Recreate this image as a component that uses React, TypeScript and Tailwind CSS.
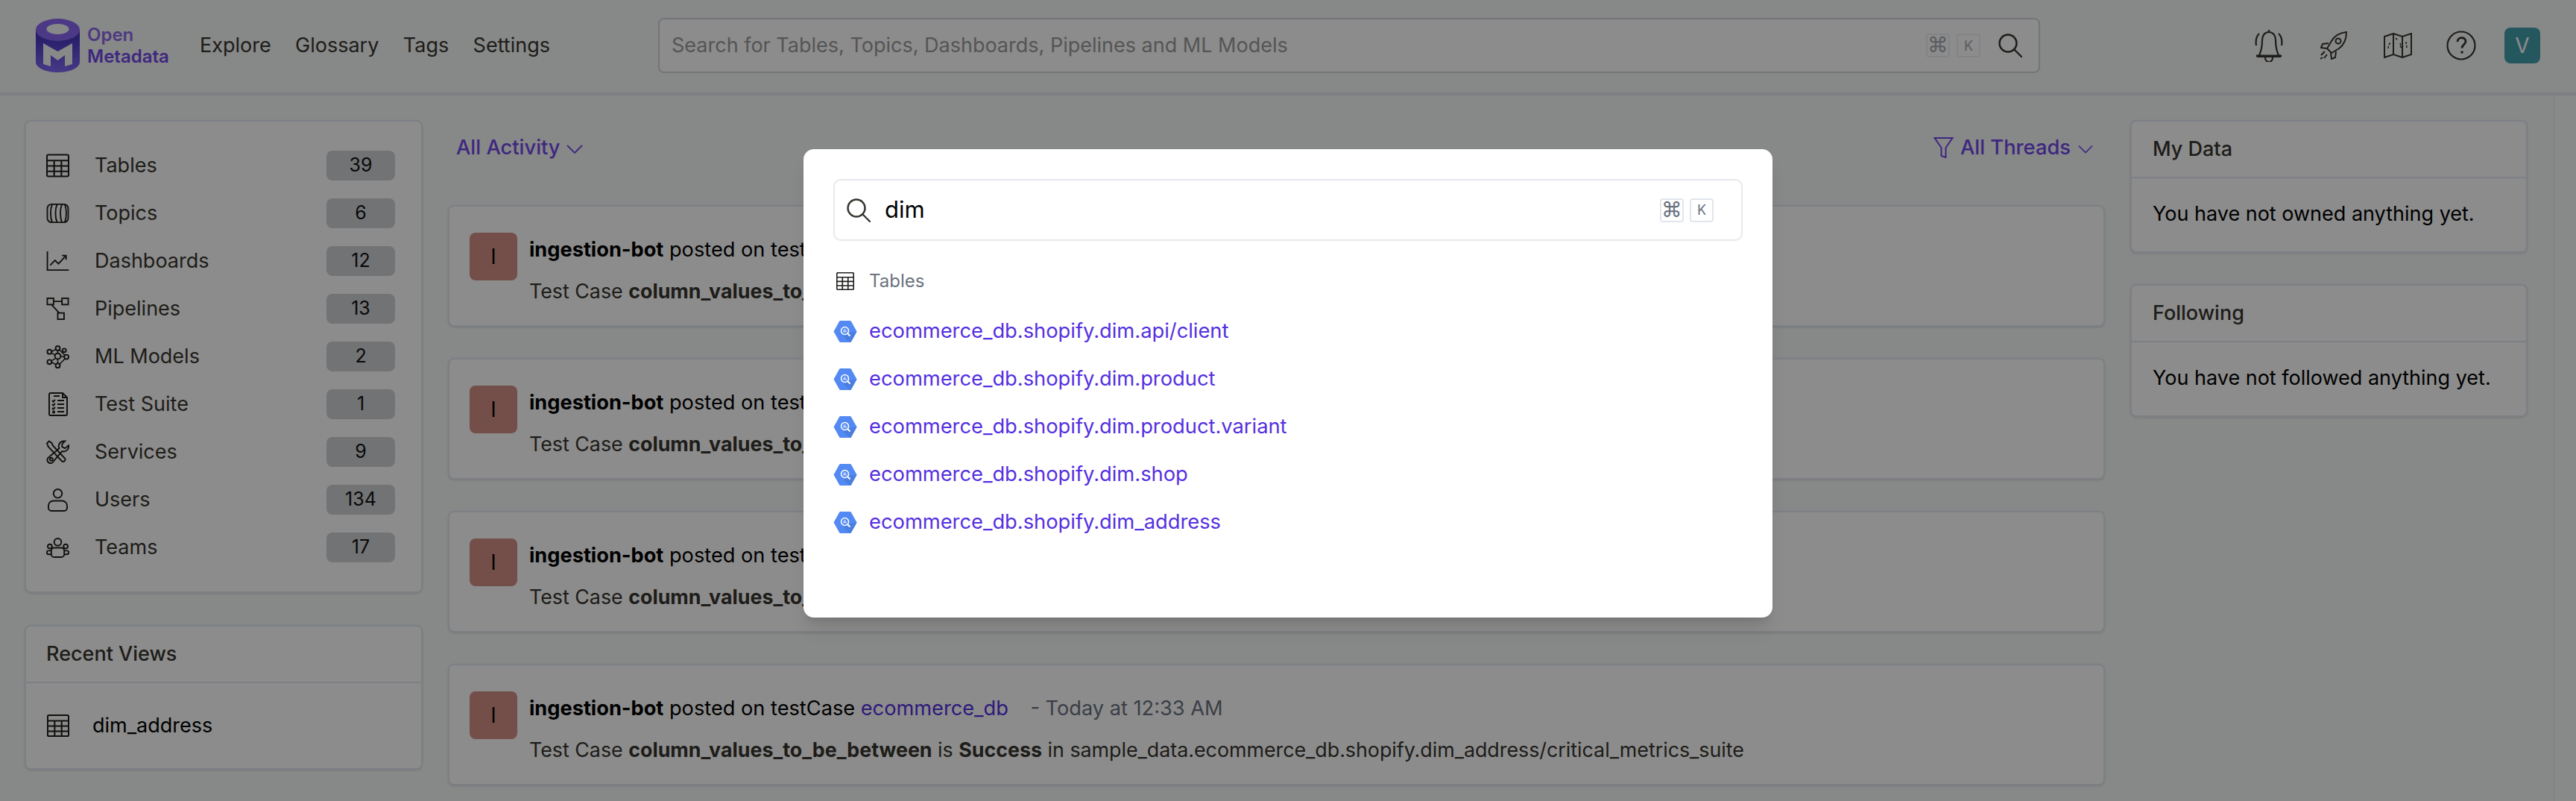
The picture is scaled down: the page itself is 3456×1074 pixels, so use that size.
import React from "react";

type IconProps = { className?: string };

function TableIcon({ className }: IconProps) {
  return (
    <svg viewBox="0 0 32 32" className={className} fill="none" stroke="currentColor" strokeWidth="2.200">
      <rect x="1" y="1" width="30" height="30" rx="2" />
      <path d="M1 9h30M1 16.500h30M1 24h30M11 9v22M21 9v22" />
    </svg>
  );
}

function TopicIcon({ className }: IconProps) {
  return (
    <svg viewBox="0 0 32 30" className={className} fill="none" stroke="currentColor" strokeWidth="2">
      <rect x="1" y="2" width="30" height="26" rx="6" />
      <path d="M8 2c-3 7-3 19 0 26M15 2c-3 7-3 19 0 26M22 2c-3 7-3 19 0 26M26 2c3 7 3 19 0 26" />
    </svg>
  );
}

function DashboardIcon({ className }: IconProps) {
  return (
    <svg viewBox="0 0 32 28" className={className} fill="none" stroke="currentColor" strokeWidth="2">
      <path d="M1 0v27h31" />
      <path d="M5 20l7-7 5 5 11-12M22 6h6v6" />
    </svg>
  );
}

function PipelineIcon({ className }: IconProps) {
  return (
    <svg viewBox="0 0 32 32" className={className} fill="none" stroke="currentColor" strokeWidth="2">
      <rect x="1" y="1" width="9" height="9" />
      <rect x="22" y="1" width="9" height="9" />
      <rect x="16" y="22" width="9" height="9" />
      <path d="M10 5.500h12M7 10l11 12" />
    </svg>
  );
}

function ModelIcon({ className }: IconProps) {
  return (
    <svg viewBox="0 0 32 32" className={className} fill="none" stroke="currentColor" strokeWidth="2">
      <circle cx="16" cy="15" r="4" />
      <circle cx="16" cy="4" r="3" />
      <circle cx="28" cy="16" r="3" />
      <circle cx="16" cy="28" r="3" />
      <circle cx="4.500" cy="9" r="3" />
      <circle cx="4.500" cy="23" r="3" />
      <circle cx="25" cy="7" r="2.500" />
      <path d="M16 7v4M20 15.500h5M16 19v6M7 10.500l5.500 3M7 21.500l5.500-3M18.500 26l8-8M18 6l8 8M7 9l7-4M7 23l7 4" strokeWidth="1.600" />
    </svg>
  );
}

function SuiteIcon({ className }: IconProps) {
  return (
    <svg viewBox="0 0 26 32" className={className} fill="none" stroke="currentColor" strokeWidth="2">
      <path d="M3 1h16l6 6v22a2 2 0 0 1-2 2H3a2 2 0 0 1-2-2V3a2 2 0 0 1 2-2z" />
      <path d="M19 1v6h6M7 5h8M12 11h9M12 16h9M12 21h9M12 26h9" />
      <path d="M5 11l1.500 1.500L9 10M5 16l1.500 1.500L9 15M5 21l1.500 1.500L9 20M5.500 25l3 3M8.500 25l-3 3" />
    </svg>
  );
}

function ServiceIcon({ className }: IconProps) {
  return (
    <svg viewBox="0 0 32 32" className={className} fill="none" stroke="currentColor" strokeWidth="2">
      <path d="M1 4l3-3 4 3 1 3 17 18a3 3 0 0 1-4 4L5 11 3 9z" />
      <path d="M24 1a7 7 0 0 0-6 10L4 23a4.500 4.500 0 1 0 6 6l12-14a7 7 0 0 0 9-8l-5 4-4-2v-4l4-4z" />
      <circle cx="7" cy="26" r="2" />
    </svg>
  );
}

function UserIcon({ className }: IconProps) {
  return (
    <svg viewBox="0 0 28 32" className={className} fill="none" stroke="currentColor" strokeWidth="2">
      <circle cx="14" cy="7" r="6" />
      <path d="M8 17h12a7 7 0 0 1 7 7v3a4 4 0 0 1-4 4H5a4 4 0 0 1-4-4v-3a7 7 0 0 1 7-7z" />
    </svg>
  );
}

function TeamIcon({ className }: IconProps) {
  return (
    <svg viewBox="0 0 32 28" className={className} fill="none" stroke="currentColor" strokeWidth="2">
      <circle cx="16" cy="6" r="5" />
      <circle cx="5" cy="12" r="3" />
      <circle cx="27" cy="12" r="3" />
      <path d="M11 14h10a4 4 0 0 1 4 4v5a4 4 0 0 1-4 4H11a4 4 0 0 1-4-4v-5a4 4 0 0 1 4-4z" />
      <path d="M7 18H3a2 2 0 0 0-2 2v1a2 2 0 0 0 2 2h4M25 18h4a2 2 0 0 1 2 2v1a2 2 0 0 1-2 2h-4" />
    </svg>
  );
}

function SearchIcon({ className }: IconProps) {
  return (
    <svg viewBox="0 0 32 32" className={className} fill="none" stroke="currentColor" strokeWidth="2.400">
      <circle cx="13" cy="13" r="11.500" />
      <path d="M21.500 21.500L31 31" strokeLinecap="round" />
    </svg>
  );
}

function Chevron({ className }: IconProps) {
  return (
    <svg viewBox="0 0 22 12" className={className} fill="none" stroke="currentColor" strokeWidth="1.800">
      <path d="M1 1l10 10L21 1" />
    </svg>
  );
}

function BigQueryIcon() {
  return (
    <svg viewBox="0 0 32 29" className="h-[29px] w-8 shrink-0">
      <path d="M0.500 14.500L8 1a2 2 0 0 1 1.500-1h13a2 2 0 0 1 1.500 1l7.500 13.500L24 28a2 2 0 0 1-1.500 1h-13A2 2 0 0 1 8 28z" fill="#5389f2" />
      <path d="M19 18l3-2 9.500-1.500L24 28a2 2 0 0 1-1.500 1h-1L14 21z" fill="#4a7fe0" />
      <circle cx="15.500" cy="13.500" r="5" fill="none" stroke="#fff" strokeWidth="1.500" />
      <path d="M19 17l3.500 3.500" stroke="#fff" strokeWidth="2" />
      <path d="M14 12.500v3M15.700 11v4.500M17.200 13.500v2" stroke="#fff" strokeWidth="1" />
    </svg>
  );
}

function Logo() {
  return (
    <svg viewBox="0 0 59 72" className="h-[72px] w-[59px]">
      <defs>
        <linearGradient id="cyl" x1="0" y1="0" x2="0" y2="1">
          <stop offset="0" stopColor="#3c2ab4" />
          <stop offset="1" stopColor="#8269f5" />
        </linearGradient>
      </defs>
      <path d="M0 14h59v44c0 8-13 14-29.500 14S0 66 0 58z" fill="url(#cyl)" />
      <ellipse cx="29.500" cy="15" rx="29.500" ry="15" fill="#8a68f2" />
      <ellipse cx="29.500" cy="14" rx="15" ry="7" fill="#f6f8f8" />
      <path d="M10 33l19.500 11L49 33v28l-10 3V49l-9.500 7-9.500-7v15l-10-3z" fill="#f6f8f8" />
    </svg>
  );
}

function HeaderIcons() {
  return (
    <div className="flex items-center text-[#37352f]">
      <svg viewBox="0 0 38 44" className="h-[44px] w-[38px]" fill="none" stroke="currentColor" strokeWidth="2.200">
        <path d="M19 1v3M19 4c-6 0-9 5-9 11 0 8-1 15-5 22h28c-4-7-5-14-5-22 0-6-3-11-9-11z" />
        <path d="M2 36h34" strokeWidth="3" />
        <path d="M14 38c0 8 10 8 10 0M6 6C2 10 1 16 2 22M32 6c4 4 5 10 4 16" />
      </svg>
      <svg viewBox="0 0 38 38" className="ml-[49px] h-[38px] w-[38px]" fill="none" stroke="currentColor" strokeWidth="2">
        <path d="M36 1c-9 1-16 5-20 12l-6 10 6 6 10-6c7-5 10-13 10-22z" />
        <circle cx="25" cy="13" r="3.500" />
        <path d="M12 16l-8 1-2 5 8 1M22 27l-1 8-5 2-1-8M7 27l-5 5M10 31l-4 5M4 35l-3 2" />
      </svg>
      <svg viewBox="0 0 38 34" className="ml-[48px] h-[34px] w-[38px]" fill="none" stroke="currentColor" strokeWidth="2">
        <path d="M1 5l12-4 12 4 12-4v28l-12 4-12-4-12 4zM13 1v28M25 5v28" />
        <path d="M6 21c0-4 2-7 4-9M16 7l3 3M22 14l2 6M24 20l-3-3M24 20l3-3M30 12l1 8" strokeDasharray="3 2" strokeWidth="1.500" />
      </svg>
      <svg viewBox="0 0 40 40" className="ml-[46px] h-10 w-10" fill="none" stroke="currentColor" strokeWidth="2.200">
        <circle cx="20" cy="20" r="18.500" />
        <path d="M15 15c0-7 11-7 11-0.500 0 4-5 4.500-5 9" strokeWidth="2.800" />
        <circle cx="21" cy="29" r="1.800" fill="currentColor" stroke="none" />
      </svg>
      <div className="ml-[38px] flex h-12 w-12 items-center justify-center rounded-lg bg-[#44a0ac] text-[28px] text-[#ffffff]">V</div>
    </div>
  );
}

function Kbd({ small, children }: { small?: boolean; children: React.ReactNode }) {
  return (
    <span className={`flex h-8 w-8 items-center justify-center rounded border-2 border-[#e1e6ec] bg-white text-[#6b7280] ${small ? "text-[18px]" : "text-[28px] font-['DejaVu_Sans',sans-serif]"}`}>
      {children}
    </span>
  );
}

const categories = [
  { name: "Tables", count: 39, icon: <TableIcon className="h-8 w-[31px]" /> },
  { name: "Topics", count: 6, icon: <TopicIcon className="h-[28px] w-[31px]" /> },
  { name: "Dashboards", count: 12, icon: <DashboardIcon className="h-[26px] w-[31px]" /> },
  { name: "Pipelines", count: 13, icon: <PipelineIcon className="h-[30px] w-[31px]" /> },
  { name: "ML Models", count: 2, icon: <ModelIcon className="h-[31px] w-[31px]" /> },
  { name: "Test Suite", count: 1, icon: <SuiteIcon className="h-8 w-[26px]" /> },
  { name: "Services", count: 9, icon: <ServiceIcon className="h-8 w-[31px]" /> },
  { name: "Users", count: 134, icon: <UserIcon className="h-[31px] w-[27px]" /> },
  { name: "Teams", count: 17, icon: <TeamIcon className="h-[27px] w-[31px]" /> },
];

const results = [
  "ecommerce_db.shopify.dim.api/client",
  "ecommerce_db.shopify.dim.product",
  "ecommerce_db.shopify.dim.product.variant",
  "ecommerce_db.shopify.dim.shop",
  "ecommerce_db.shopify.dim_address",
];

function FeedCard() {
  return (
    <div className="flex h-[163px] gap-4 rounded-lg border-2 border-[#e2e8f0] bg-white pl-[27px] pt-[35px] shadow-sm">
      <div className="flex h-16 w-16 shrink-0 items-center justify-center rounded-lg bg-[#d39087] text-[28px] text-black">I</div>
      <div className="leading-[36px] text-[#37352f]">
        <p className="mt-[5px] whitespace-nowrap text-[27.200px] text-black">
          <b className="font-bold">ingestion-bot</b> posted on testCase <span className="text-[#5530e0]">ecommerce_db</span>{" "}
          <span className="ml-[22px] text-[#6b7280]">- Today at 12:33 AM</span>
        </p>
        <p className="mt-[19px] whitespace-nowrap text-[26.800px]">
          Test Case <b className="font-bold">column_values_to_be_between</b> is <b className="font-bold">Success</b> in sample_data.ecommerce_db.shopify.dim_address/critical_metrics_suite
        </p>
      </div>
    </div>
  );
}

function SideCard({ title, text }: { title: string; text: string }) {
  return (
    <div className="h-[178px] rounded-lg border-2 border-[#e2e8f0] bg-white shadow-sm">
      <div className="flex h-[76px] items-center border-b-2 border-[#e2e8f0] pl-7 text-[27px] font-medium text-[#37352f]">{title}</div>
      <div className="flex h-[98px] items-center pb-[2px] pl-7 text-[27px] text-black">{text}</div>
    </div>
  );
}

export default function App() {
  return (
    <div className="relative h-[1074px] w-[3456px] overflow-hidden bg-[#f6f8f8] font-['Inter',sans-serif]">
      <header className="flex h-[128px] items-center border-b-4 border-[#e2e8f0] pb-[2px] pl-12 pr-12">
        <Logo />
        <div className="ml-[10px] flex w-[92px] flex-col text-[24px] font-semibold leading-[29px]">
          <span className="text-[#8f69ea]">Open</span>
          <span className="text-[#7147e8]">Metadata</span>
        </div>
        <nav className="ml-[59px] flex w-[470px] justify-between text-[27px] text-[#37352f]">
          <span>Explore</span>
          <span>Glossary</span>
          <span>Tags</span>
          <span>Settings</span>
        </nav>
        <div className="ml-[145px] flex h-[74px] w-[1854px] items-center rounded-lg border-2 border-[#d1d5db] bg-white pl-4 pr-[22px]">
          <span className="flex-1 text-[27px] text-[#9b9c9c]">Search for Tables, Topics, Dashboards, Pipelines and ML Models</span>
          <div className="flex gap-[9px] opacity-60">
            <Kbd>⌘</Kbd>
            <Kbd small>K</Kbd>
          </div>
          <SearchIcon className="ml-6 h-8 w-8 text-[#37352f]" />
        </div>
        <div className="ml-auto">
          <HeaderIcons />
        </div>
      </header>

      <main className="flex gap-[34px] pl-[33px] pt-[33px]">
        <aside className="flex w-[534px] shrink-0 flex-col gap-[43px]">
          <div className="rounded-lg border-2 border-[#e2e8f0] bg-white py-[27px] shadow-sm">
            {categories.map((c) => (
              <div key={c.name} className="flex h-16 items-center pl-[27px] pr-[35px]">
                <span className="flex w-[31px] justify-center text-[#1f1f1d]">{c.icon}</span>
                <span className="ml-[34px] flex-1 text-[27px] text-[#37352f]">{c.name}</span>
                <span className="flex h-10 w-[92px] items-center justify-center rounded-lg bg-[#cfd1d5] text-[25px] text-[#111]">{c.count}</span>
              </div>
            ))}
          </div>
          <div className="h-[194px] rounded-lg border-2 border-[#e2e8f0] bg-white shadow-sm">
            <div className="flex h-[76px] items-center border-b-2 border-[#e2e8f0] pl-[27px] text-[27px] font-medium text-[#37352f]">Recent Views</div>
            <div className="flex h-[114px] items-center pl-7 text-[27px] text-black">
              <TableIcon className="h-[30px] w-[30px] text-[#1f1f1d]" />
              <span className="ml-[31px]">dim_address</span>
            </div>
          </div>
        </aside>

        <section className="w-[2223px] shrink-0">
          <div className="flex h-[74px] items-center justify-between pl-[11px] pr-4 text-[27.300px] font-medium text-[#7147e8]">
            <div className="flex items-center gap-[8px]">
              All Activity
              <Chevron className="mt-1 h-3 w-[22px]" />
            </div>
            <div className="flex items-center">
              <svg viewBox="0 0 28 28" className="h-7 w-[29px]" fill="none" stroke="currentColor" strokeWidth="2">
                <path d="M2 1h24L17 14v13l-6-2V14z" />
              </svg>
              <span className="ml-2">All Threads</span>
              <Chevron className="ml-[10px] mt-1 h-3 w-5" />
            </div>
          </div>
          <div className="mt-10 flex flex-col gap-[42px]">
            <FeedCard />
            <FeedCard />
            <FeedCard />
            <FeedCard />
          </div>
        </section>

        <aside className="flex w-[533px] shrink-0 flex-col gap-[42px]">
          <SideCard title="My Data" text="You have not owned anything yet." />
          <SideCard title="Following" text="You have not followed anything yet." />
        </aside>
      </main>

      {/* scrollbar track */}
      <div className="absolute bottom-0 right-0 top-[128px] w-[30px] border-l-2 border-[#eceef0] bg-[#f8f9f9]" />

      <div className="absolute inset-0 flex justify-center bg-black/45 pt-[200px]">
        <div className="h-[628px] w-[1300px] rounded-[14px] bg-white px-10 pt-10 shadow-xl">
          <div className="flex h-[83px] items-center rounded-[10px] border-2 border-[#e8e8ee] pl-4 pr-[37px]">
            <SearchIcon className="h-8 w-8 text-[#37352f]" />
            <span className="ml-[19px] flex-1 text-[31px] text-black">dim</span>
            <div className="flex gap-2">
              <Kbd>⌘</Kbd>
              <Kbd small>K</Kbd>
            </div>
          </div>
          <div className="mt-[42px] flex h-6 items-center pl-[4px]">
            <TableIcon className="h-6 w-6 text-[#1f1f1d]" />
            <span className="ml-5 text-[24px] text-[#6b7280]">Tables</span>
          </div>
          <div className="mt-[23px] flex flex-col">
            {results.map((r) => (
              <div key={r} className="flex h-16 items-center">
                <BigQueryIcon />
                <span className="ml-4 text-[27.300px] text-[#5530e0]">{r}</span>
              </div>
            ))}
          </div>
        </div>
      </div>
    </div>
  );
}
